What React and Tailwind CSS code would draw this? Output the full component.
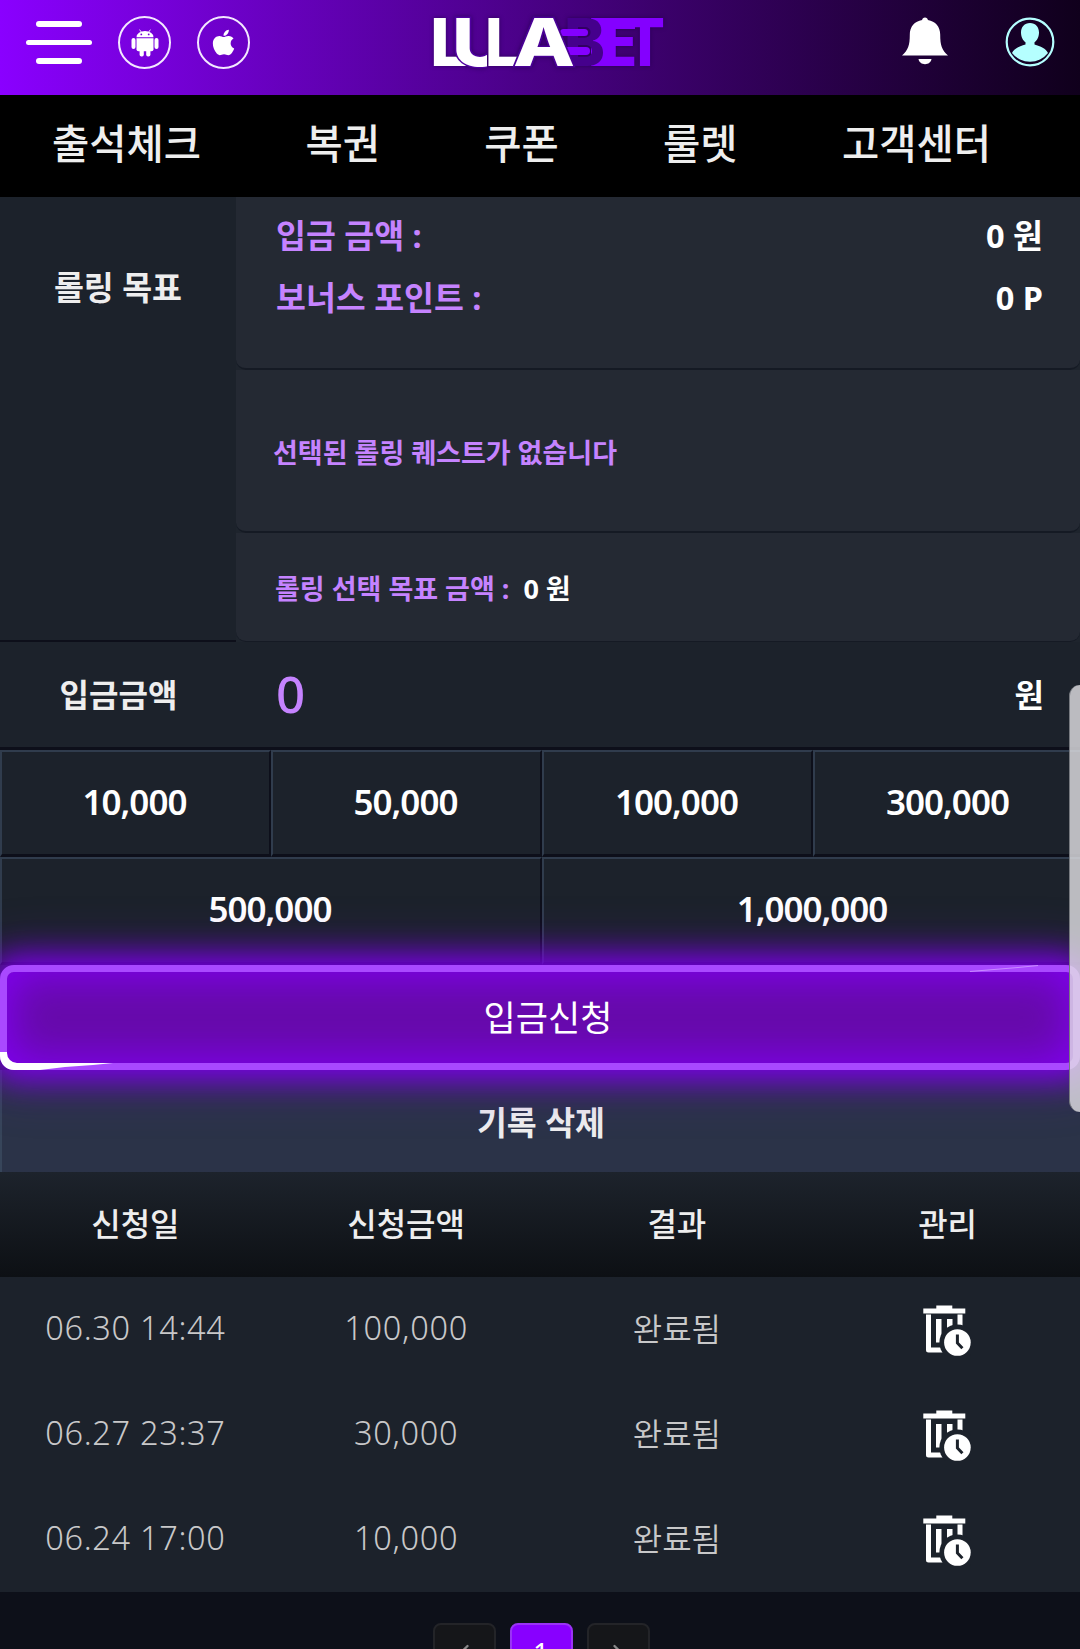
import { useState } from 'react'
import { FaApple } from 'react-icons/fa'
import { ChevronLeft, ChevronRight } from 'lucide-react'

const MENU = ['출석체크', '복권', '쿠폰', '룰렛', '고객센터']

const AMOUNTS = [
  { label: '10,000', span: 'col-span-1' },
  { label: '50,000', span: 'col-span-1' },
  { label: '100,000', span: 'col-span-1' },
  { label: '300,000', span: 'col-span-1' },
  { label: '500,000', span: 'col-span-2' },
  { label: '1,000,000', span: 'col-span-2' },
]

const HISTORY = [
  { date: '06.30 14:44', amount: '100,000', status: '완료됨' },
  { date: '06.27 23:37', amount: '30,000', status: '완료됨' },
  { date: '06.24 17:00', amount: '10,000', status: '완료됨' },
]

function AndroidIcon() {
  return (
    <svg width="28" height="28" viewBox="0 0 28 28" fill="white">
      <path d="M8.6 0.6l2 3M19.4 0.6l-2 3" stroke="white" strokeWidth="0.9" />
      <path d="M5.5 8.2a8.5 6.2 0 0 1 17 0z" />
      <path d="M5.5 9.2h17v11a2 2 0 0 1-2 2h-13a2 2 0 0 1-2-2z" />
      <rect x="0.5" y="9" width="4" height="11" rx="2" />
      <rect x="23.5" y="9" width="4" height="11" rx="2" />
      <rect x="8.6" y="18" width="4.2" height="9.6" rx="1.8" />
      <rect x="15.2" y="18" width="4.2" height="9.6" rx="1.8" />
      <circle cx="10.3" cy="5.4" r="0.9" fill="#7300d6" />
      <circle cx="17.7" cy="5.4" r="0.9" fill="#7300d6" />
    </svg>
  )
}

function BellIcon() {
  return (
    <svg width="46" height="48" viewBox="0 0 46 48" fill="white">
      <path d="M23 0.5c1.6 0 2.7 1 2.9 2.4C33.4 4.2 38.2 9.5 38.2 17.500c0 11 1.6 15.500 7.800 20.900H0c6.200-5.400 7.800-9.900 7.800-20.900 0-8 4.800-13.300 12.300-14.600C20.300 1.500 21.400 0.500 23 0.500z" />
      <path d="M16.500 42h13c-0.500 3.200-3.200 5.200-6.500 5.200s-6-2-6.500-5.200z" />
    </svg>
  )
}

function UserIcon() {
  return (
    <svg width="50" height="50" viewBox="0 0 50 50" fill="#b5ffff">
      <circle cx="25" cy="25" r="23.3" fill="none" stroke="#b5ffff" strokeWidth="2.2" />
      <path d="M25 6c5.500 0 9 4 9 9.500 0 4-1.800 8-4.500 9.800v2.200c6 1.800 11.500 4 13.500 8.500A23 23 0 0 1 7 36c2-4.500 7.500-6.700 13.500-8.500v-2.200c-2.700-1.800-4.500-5.800-4.500-9.800C16 10 19.500 6 25 6z" />
    </svg>
  )
}

function Logo() {
  return (
    <svg width="236" height="56" viewBox="0 0 236 56" fontFamily="Inter, sans-serif" fontWeight="800" fontSize="66" className="overflow-visible drop-shadow-[0_0_2px_rgba(30,0,70,0.7)]">
      <clipPath id="uCut"><path d="M20 0h21v36h14v20H20z" /></clipPath>
      <g fill="#8400ff">
        <text y="52" x="171" textLength="34" lengthAdjust="spacingAndGlyphs">E</text>
        <text y="52" x="193" textLength="40" lengthAdjust="spacingAndGlyphs">T</text>
        <path d="M159 4h44v11h-25v37h-19z" />
      </g>
      <text y="52" x="132" fill="#45008c" textLength="41" lengthAdjust="spacingAndGlyphs">B</text>
      <rect x="128" y="15" width="28" height="7" rx="3.5" fill="#8400ff" />
      <rect x="130" y="33" width="28" height="8" rx="4" fill="#8400ff" />
      <g fill="white">
        <text y="52" x="-2" textLength="39" lengthAdjust="spacingAndGlyphs">L</text>
        <text y="52" x="20" textLength="56" lengthAdjust="spacingAndGlyphs" stroke="#5000a0" strokeWidth="3" paintOrder="stroke" clipPath="url(#uCut)">U</text>
        <text y="52" x="53" textLength="35" lengthAdjust="spacingAndGlyphs">L</text>
        <text y="52" x="81" textLength="62" lengthAdjust="spacingAndGlyphs" stroke="#4a0096" strokeWidth="3" paintOrder="stroke">A</text>
      </g>
    </svg>
  )
}

function TrashClockIcon() {
  return (
    <svg width="48" height="51" viewBox="0 0 48 51" fill="white">
      <path d="M13.300 0.500h16v3h13v5H0.300v-5h13z" />
      <path d="M5.500 8v35.500h31.500V8" fill="none" stroke="white" strokeWidth="5" strokeLinejoin="round" transform="translate(0 1.500)" />
      <rect x="13" y="14" width="5.500" height="23.500" />
      <rect x="24" y="14" width="5.500" height="14" />
      <circle cx="34.400" cy="37.500" r="18" fill="#1c222b" />
      <circle cx="34.400" cy="37.500" r="13.300" />
      <path d="M34.400 29.500v8.500l5 5.300" fill="none" stroke="#1c222b" strokeWidth="3" />
    </svg>
  )
}

function Header() {
  return (
    <header className="flex h-[95px] items-start justify-between bg-gradient-to-r from-[#8a00ff] to-[#10001c] pl-[26px] pr-[25px]">
      <div className="flex w-[406px] items-center pt-4">
        <div className="flex w-[66px] flex-col items-center gap-[13px]">
          <span className="h-[6px] w-[46px] rounded-full bg-white" />
          <span className="h-[5px] w-[66px] rounded-full bg-white" />
          <span className="h-[6px] w-[46px] rounded-full bg-white" />
        </div>
        <div className="ml-[26px] flex size-[53px] items-center justify-center rounded-full border-2 border-[#f3e8ff]">
          <AndroidIcon />
        </div>
        <div className="ml-[26px] flex size-[53px] items-center justify-center rounded-full border-2 border-[#f3e8ff]">
          <FaApple className="size-[29px] text-white" />
        </div>
      </div>
      <div className="w-[236px] pt-[14px]"><Logo /></div>
      <div className="flex w-[387px] justify-end gap-[57px] pt-[17px]">
        <BellIcon />
        <UserIcon />
      </div>
    </header>
  )
}

function QuestPanel() {
  return (
    <section className="flex h-[445px]">
      <div className="w-[236px] border-b-2 border-[#0d0f1a] pt-[67px] text-center text-[32.5px] font-bold leading-[48px] text-[#eee]">
        롤링 목표
      </div>
      <div className="flex-1 bg-[#1e242d] font-bold text-[#c583ff]">
        <div className="h-[173px] rounded-b-[10px] border-b-2 border-[#151a24] bg-[#242933] pl-10 pr-[37px] pt-[8px] text-[32.5px] leading-[62px]">
          <div className="flex justify-between"><span>입금 금액 :</span><span className="text-white">0 원</span></div>
          <div className="flex justify-between"><span>보너스 포인트 :</span><span className="text-white">0 P</span></div>
        </div>
        <div className="flex h-[163px] items-center rounded-b-[10px] border-b-2 border-[#151a24] bg-[#242933] pl-[37px] pt-[6px] text-[27px]">
          선택된 롤링 퀘스트가 없습니다
        </div>
        <div className="flex h-[109px] items-center gap-[14px] rounded-b-[10px] border-b border-[#151a24] bg-[#242933] pl-[39px] pt-[4px] text-[27px]">
          <span>롤링 선택 목표 금액 :</span>
          <span className="text-white">0 원</span>
        </div>
      </div>
    </section>
  )
}

function SubmitButton() {
  return (
    <button className="relative z-10 flex h-[105px] w-full items-center justify-center rounded-[14px] border-[7px] border-[#a949ff] bg-[#660aaa] pl-[16px] pt-[2px] text-[35px] font-normal text-white shadow-[0_0_30px_9px_#7a00e6,0_0_50px_14px_rgba(110,0,210,0.35),inset_0_0_40px_5px_#8000f0]">
      입금신청
      {/* light streak running along the border */}
      <svg className="absolute -left-[7px] -top-[7px]" width="1080" height="105" viewBox="0 0 1080 105">
        <path d="M0 87h7v1a10 10 0 0 0 10 10h96l-20 2-28 2-25 3H14A14 14 0 0 1 0 91z" fill="white" />
        <path d="M970 6.500l24-2 24-2 20-2" stroke="#c98cff" strokeWidth="1" fill="none" />
      </svg>
    </button>
  )
}

export default function App() {
  const [amount, setAmount] = useState('0')

  return (
    <div className="relative h-[1649px] w-[1080px] overflow-hidden bg-[#0d1019] font-['Noto_Sans','Noto_Sans_CJK_KR',sans-serif]">
      <Header />
      <nav className="flex h-[102px] items-center justify-between bg-black pb-[3px] pl-[52px] pr-[89px] text-[40.5px] font-medium text-[#eee]">
        {MENU.map(m => <span key={m}>{m}</span>)}
      </nav>

      <main className="bg-[#1c222b]">
        <QuestPanel />

        <div className="flex h-[108px] items-center border-b-[3px] border-[#0d0f1a] font-bold">
          <span className="w-[237px] text-center text-[32px] text-[#eee]">입금금액</span>
          <span className="flex-1 pb-[2px] pl-[39px] text-[51px] font-medium text-[#c583ff]">{amount}</span>
          <span className="pr-[36px] text-[32px] text-white">원</span>
        </div>

        <div className="grid w-[1084px] grid-cols-4 grid-rows-[107px_108px]">
          {AMOUNTS.map(a => (
            <button
              key={a.label}
              onClick={() => setAmount(a.label)}
              className={`${a.span} border-2 border-b-[3px] border-b-[#0d0f1a] border-l-[#303c4d] border-r-[#0d0f1a] border-t-[#303c4d] pb-[2px] pr-[2px] text-[35px] font-semibold tracking-[-1px] text-white`}
            >
              {a.label}
            </button>
          ))}
        </div>

        <SubmitButton />
        <button className="block h-[102px] w-full border-l-2 border-[#37455a] bg-[#2b3348] pt-[4px] text-[32.5px] font-bold text-[#eee]">기록 삭제</button>

        <div className="bg-gradient-to-b from-[#1d232c] to-[#0d1014]">
          <div className="grid h-[105px] w-[1083px] grid-cols-4 items-center pb-[2px] text-center text-[32px] font-medium text-[#eee]">
            <span>신청일</span>
            <span>신청금액</span>
            <span>결과</span>
            <span>관리</span>
          </div>
        </div>
        {HISTORY.map(h => (
          <div key={h.date} className="grid h-[105px] w-[1083px] grid-cols-4 items-center pb-[2px] text-center text-[32.5px] font-[350] text-[#c8c8c9]">
            <span className="tracking-[0.7px]">{h.date}</span>
            <span className="tracking-[0.7px]">{h.amount}</span>
            <span className="text-[32px]">{h.status}</span>
            <span className="flex justify-center pr-[2px] pt-[4px]"><TrashClockIcon /></span>
          </div>
        ))}
      </main>

      <div className="flex justify-center gap-[14px] pl-[2px] pt-[31px] text-[28px]">
        <button className="flex size-[63px] items-center justify-center rounded-[8px] border-2 border-[#232428] bg-[#151619] pb-1 text-[#888]"><ChevronLeft size={28} /></button>
        <button className="flex size-[63px] items-center justify-center rounded-[8px] border-2 border-[#9a33f5] bg-[#8800ff] pb-[6px] text-white">1</button>
        <button className="flex size-[63px] items-center justify-center rounded-[8px] border-2 border-[#232428] bg-[#151619] pb-1 text-[#888]"><ChevronRight size={28} /></button>
      </div>

      <div className="absolute right-0 top-[685px] z-20 h-[427px] w-[11px] rounded-l-[12px] border-l border-[#777a80] bg-[#e4e2e6]/80" />
    </div>
  )
}
